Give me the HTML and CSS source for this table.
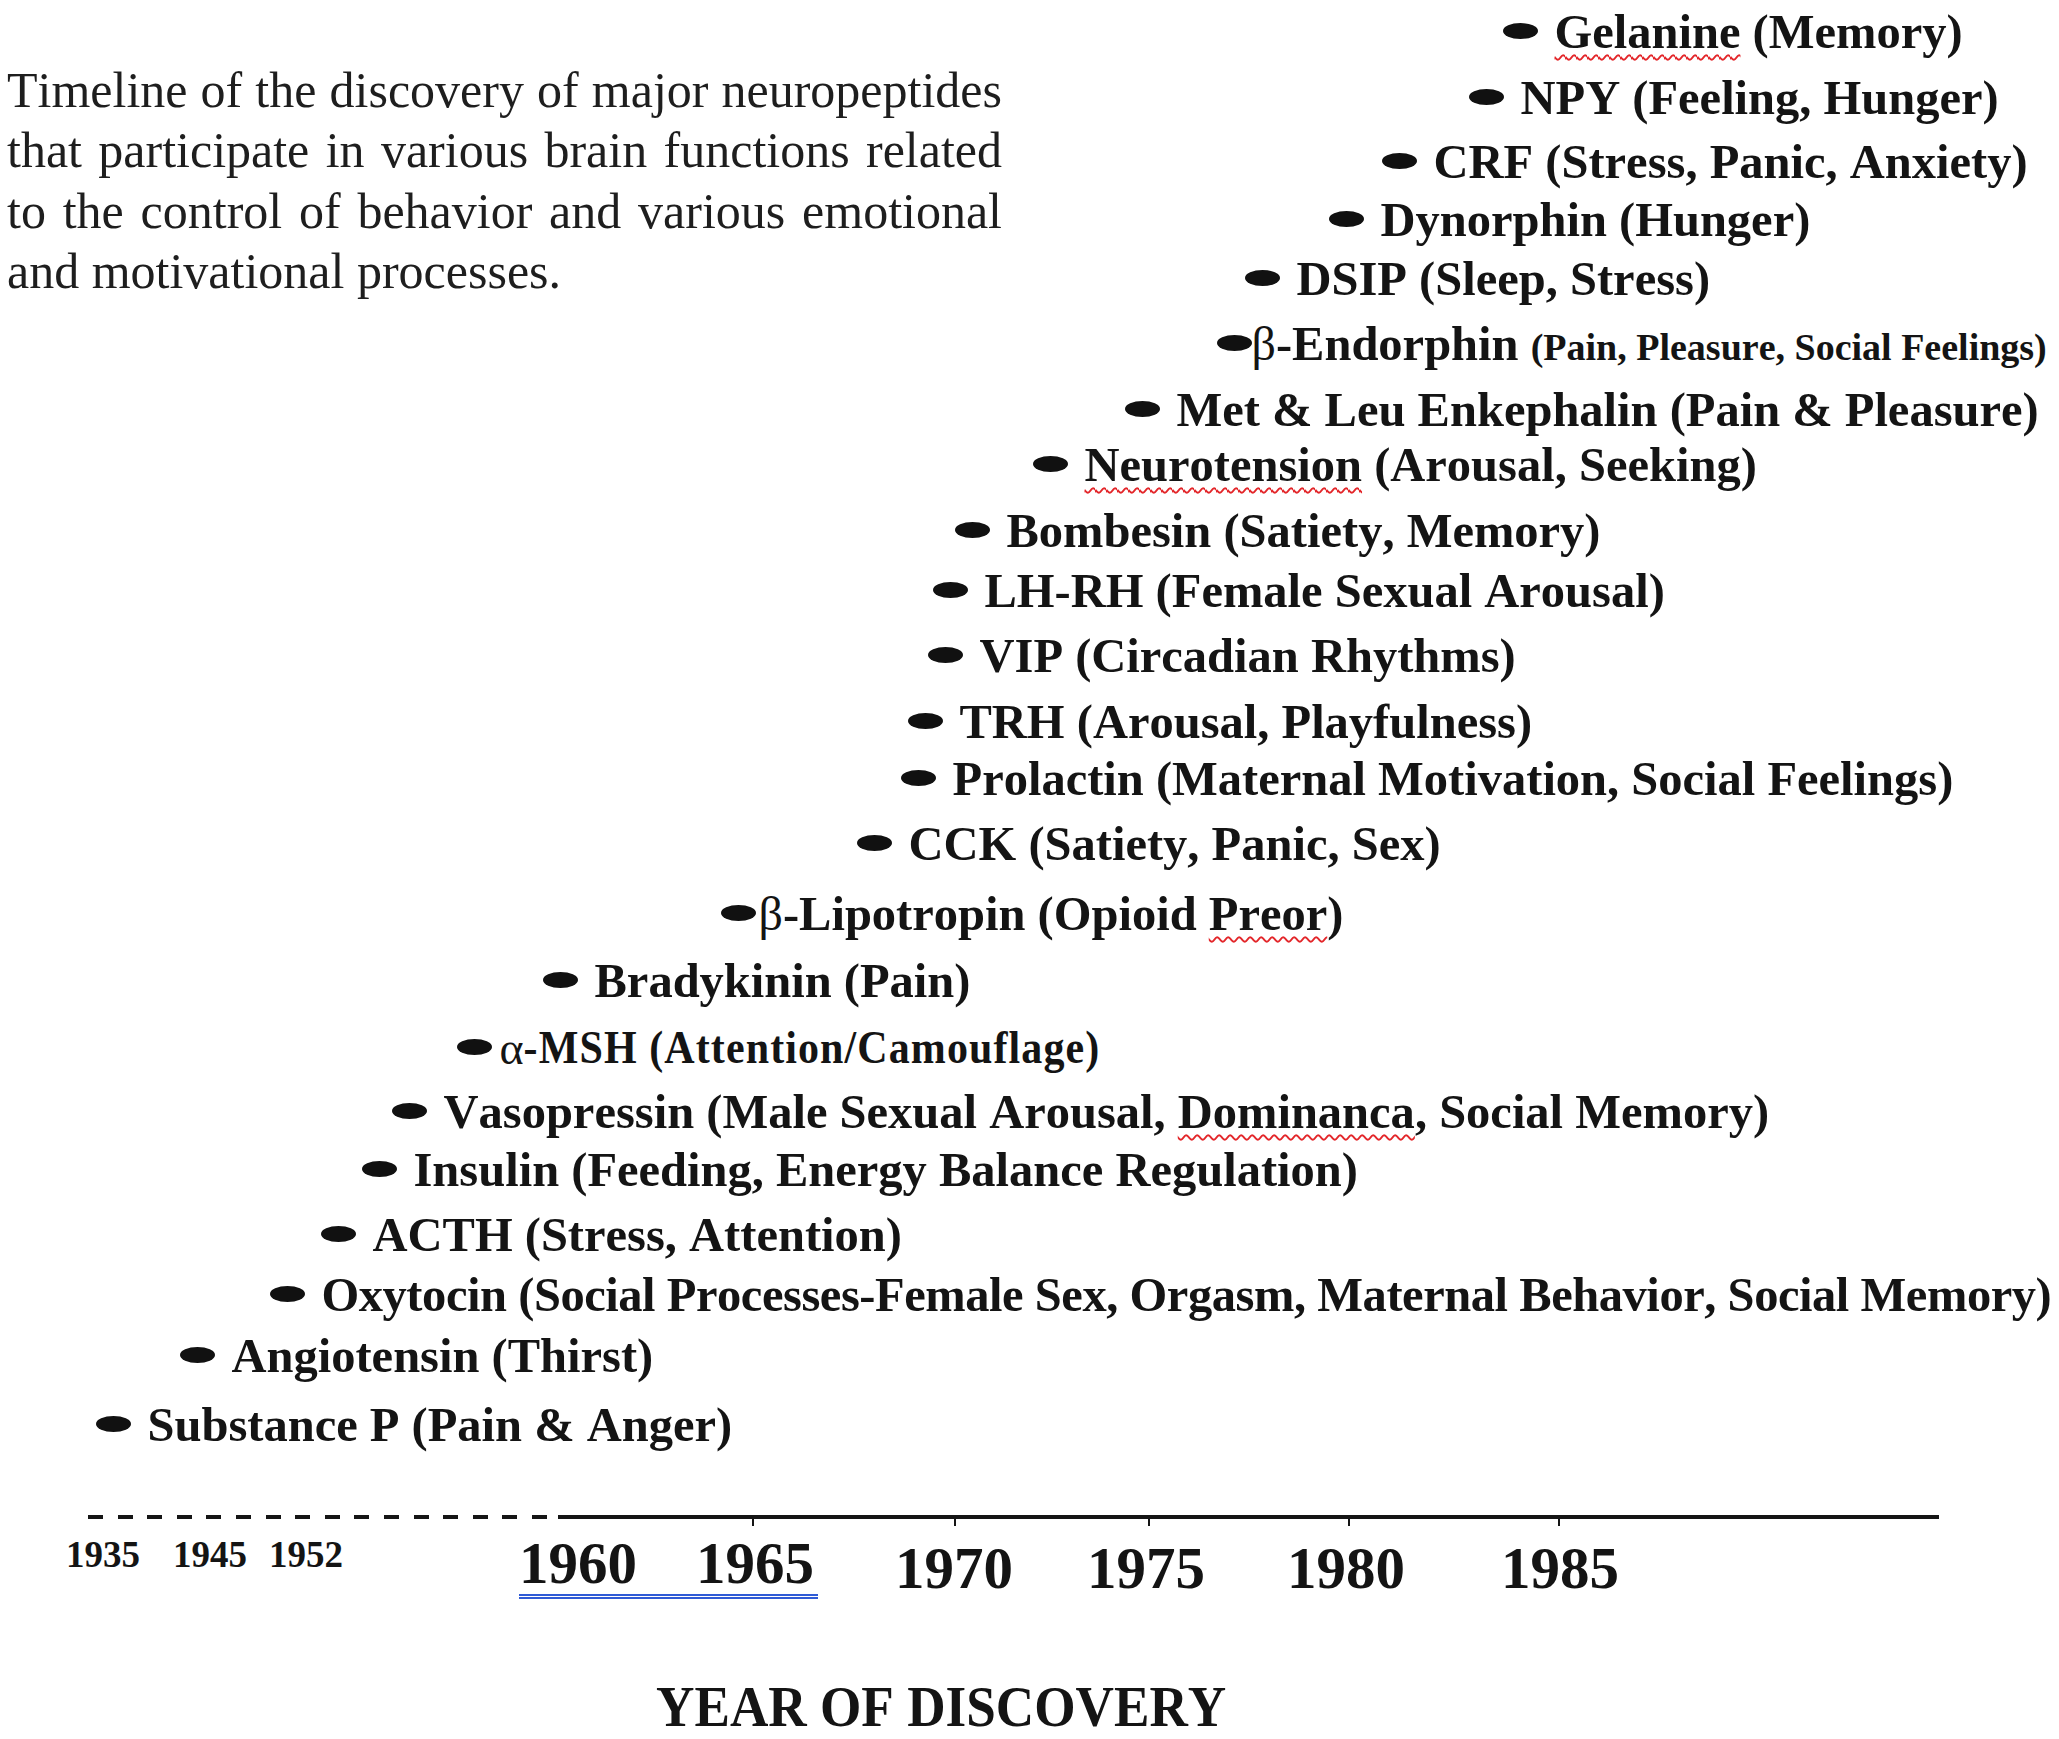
FILE: index.html
```html
<!DOCTYPE html>
<html lang="en">
<head>
<meta charset="utf-8">
<title>Timeline of neuropeptide discovery</title>
<link rel="stylesheet" href="styles.css">
</head>
<body>
<main class="page">
  <section class="chart">
    <p class="caption">Timeline of the discovery of major neuropeptides that participate in various brain functions related to the control of behavior and various emotional and motivational processes.</p>
    <ol class="timeline">
      <li class="entry" style="margin-left:1502.5px"><span class="dot"></span><span class="spell">Gelanine</span> (Memory)</li>
      <li class="entry" style="margin-left:1468.5px"><span class="dot"></span>NPY (Feeling, Hunger)</li>
      <li class="entry" style="margin-left:1381.5px"><span class="dot"></span>CRF (Stress, Panic, Anxiety)</li>
      <li class="entry" style="margin-left:1328.5px"><span class="dot"></span>Dynorphin (Hunger)</li>
      <li class="entry" style="margin-left:1244.5px"><span class="dot"></span>DSIP (Sleep, Stress)</li>
      <li class="entry" style="margin-left:1216.5px"><span class="dot dot-greek"></span><span class="greek">β</span>-Endorphin <span class="small">(Pain, Pleasure, Social Feelings)</span></li>
      <li class="entry" style="margin-left:1124.5px"><span class="dot"></span>Met &amp; Leu Enkephalin (Pain &amp; Pleasure)</li>
      <li class="entry" style="margin-left:1032.5px"><span class="dot"></span><span class="spell">Neurotension</span> (Arousal, Seeking)</li>
      <li class="entry" style="margin-left:954.5px"><span class="dot"></span>Bombesin (Satiety, Memory)</li>
      <li class="entry" style="margin-left:932.5px"><span class="dot"></span>LH-RH (Female Sexual Arousal)</li>
      <li class="entry" style="margin-left:927.5px"><span class="dot"></span>VIP (Circadian Rhythms)</li>
      <li class="entry" style="margin-left:907.5px"><span class="dot"></span>TRH (Arousal, Playfulness)</li>
      <li class="entry" style="margin-left:900.5px"><span class="dot"></span>Prolactin (Maternal Motivation, Social Feelings)</li>
      <li class="entry" style="margin-left:856.5px"><span class="dot"></span>CCK (Satiety, Panic, Sex)</li>
      <li class="entry" style="margin-left:720.5px"><span class="dot dot-greek2"></span><span class="greek">β</span>-Lipotropin (Opioid <span class="spell">Preor</span>)</li>
      <li class="entry" style="margin-left:542.5px"><span class="dot"></span>Bradykinin (Pain)</li>
      <li class="entry" style="margin-left:456.5px"><span class="dot dot-alpha"></span><span class="greek alpha">α</span><span class="spaced">-MSH (Attention/Camouflage)</span></li>
      <li class="entry" style="margin-left:391.5px"><span class="dot"></span>Vasopressin (Male Sexual Arousal, <span class="spell">Dominanca</span>, Social Memory)</li>
      <li class="entry" style="margin-left:361.5px"><span class="dot"></span>Insulin (Feeding, Energy Balance Regulation)</li>
      <li class="entry" style="margin-left:320.5px"><span class="dot"></span>ACTH (Stress, Attention)</li>
      <li class="entry tight" style="margin-left:269.5px"><span class="dot"></span>Oxytocin (Social Processes-Female Sex, Orgasm, Maternal Behavior, Social Memory)</li>
      <li class="entry" style="margin-left:179.5px"><span class="dot"></span>Angiotensin (Thirst)</li>
      <li class="entry" style="margin-left:95.5px"><span class="dot"></span>Substance P (Pain &amp; Anger)</li>
    </ol>
  </section>

  <div class="axis">
    <div class="axis-dashed"></div>
    <div class="axis-solid">
      <span class="tick" style="left:194px"></span>
      <span class="tick" style="left:396px"></span>
      <span class="tick" style="left:590px"></span>
      <span class="tick" style="left:790px"></span>
      <span class="tick" style="left:1000px"></span>
    </div>
  </div>

  <div class="labels">
    <div class="group early">
      <span class="year y1935">1935</span>
      <span class="year y1945">1945</span>
      <span class="year y1952">1952</span>
    </div>
    <div class="group mid">
      <span class="year">1960</span>
      <span class="year y1965">1965</span>
    </div>
    <div class="group late">
      <span class="year y1970">1970</span>
      <span class="year y1975">1975</span>
      <span class="year y1980">1980</span>
      <span class="year y1985">1985</span>
    </div>
  </div>

  <h2 class="title">YEAR OF DISCOVERY</h2>
</main>
</body>
</html>
```

FILE: styles.css
```css
html, body {
  margin: 0;
  padding: 0;
  background: #ffffff;
  overflow: hidden;
}

.page {
  width: 2059px;
  height: 1739px;
  font-family: "Liberation Serif", "Times New Roman", Times, serif;
  color: #141414;
  font-kerning: none;
}

/* chart area: caption and timeline share one grid cell */
.chart {
  display: grid;
  padding-top: 7px;
}

.caption,
.timeline {
  grid-area: 1 / 1;
}

.caption {
  justify-self: start;
  align-self: start;
  width: 995px;
  margin: 52.9px 0 0 7px;
  font-size: 50px;
  line-height: 60.5px;
  font-weight: normal;
  text-align: justify;
  color: #1e1e1e;
}

.timeline {
  list-style: none;
  margin: 0;
  padding: 0;
  display: grid;
  grid-template-rows: 66px 64px 58px 59px 65px 66px 55px 66px 60px 65px 66px 57px 65px 70px 67px 67px 64px 58px 65px 60px 61px 69px 50px;
}

.entry {
  font-size: 48.5px;
  line-height: 50px;
  font-weight: bold;
  white-space: nowrap;
}

.entry.tight {
  letter-spacing: -0.45px;
}

.dot {
  display: inline-block;
  width: 35px;
  height: 16px;
  border-radius: 50%;
  background: #111111;
  vertical-align: 9px;
  margin-right: 17px;
}

.dot.dot-greek {
  margin-right: 0;
}

.dot.dot-greek2 {
  margin-right: 3px;
}

.dot.dot-alpha {
  margin-right: 8px;
}

.greek {
  font-weight: normal;
  font-size: 48px;
}

.greek.alpha {
  font-size: 46px;
}

.small {
  font-size: 38px;
}

.spaced {
  display: inline-block;
  font-size: 42px;
  letter-spacing: 1.1px;
  transform: scaleY(1.08);
  transform-origin: left bottom;
}

.spell {
  text-decoration-line: underline;
  text-decoration-style: wavy;
  text-decoration-color: #e3262a;
  text-decoration-thickness: 1.5px;
  text-underline-offset: 6px;
  text-decoration-skip-ink: none;
}

/* axis */
.axis {
  display: flex;
  margin-top: 65px;
  height: 4px;
}

.axis-dashed {
  margin-left: 88px;
  width: 470px;
  height: 4px;
  background: repeating-linear-gradient(to right, #151515 0 15px, transparent 15px 29.6px);
}

.axis-solid {
  position: relative;
  width: 1381px;
  height: 4px;
  background: #151515;
}

.tick {
  position: absolute;
  top: 100%;
  width: 2px;
  height: 7px;
  background: #151515;
}

/* year labels */
.labels {
  display: flex;
  align-items: flex-start;
  margin-top: 11px;
  height: 70px;
  font-weight: bold;
  white-space: nowrap;
}

.group {
  display: flex;
}

.early {
  margin-top: 6px;
  margin-left: 66px;
  font-size: 37px;
  line-height: 37px;
}

.y1945 { margin-left: 33px; }
.y1952 { margin-left: 22px; }

.mid {
  margin-top: 3px;
  margin-left: 176px;
  font-size: 59px;
  line-height: 61px;
  border-bottom: 5px double #2f5bd6;
  padding-right: 4px;
}

.y1965 { margin-left: 59px; }

.late {
  margin-top: 9px;
  margin-left: 77px;
  font-size: 59px;
  line-height: 59px;
}

.y1975 { margin-left: 74px; }
.y1980 { margin-left: 82px; }
.y1985 { margin-left: 96px; }

.title {
  display: inline-block;
  margin: 82px 0 0 656px;
  font-size: 57px;
  line-height: 50px;
  font-weight: bold;
  white-space: nowrap;
  transform: scaleX(0.933);
  transform-origin: left top;
}
```
